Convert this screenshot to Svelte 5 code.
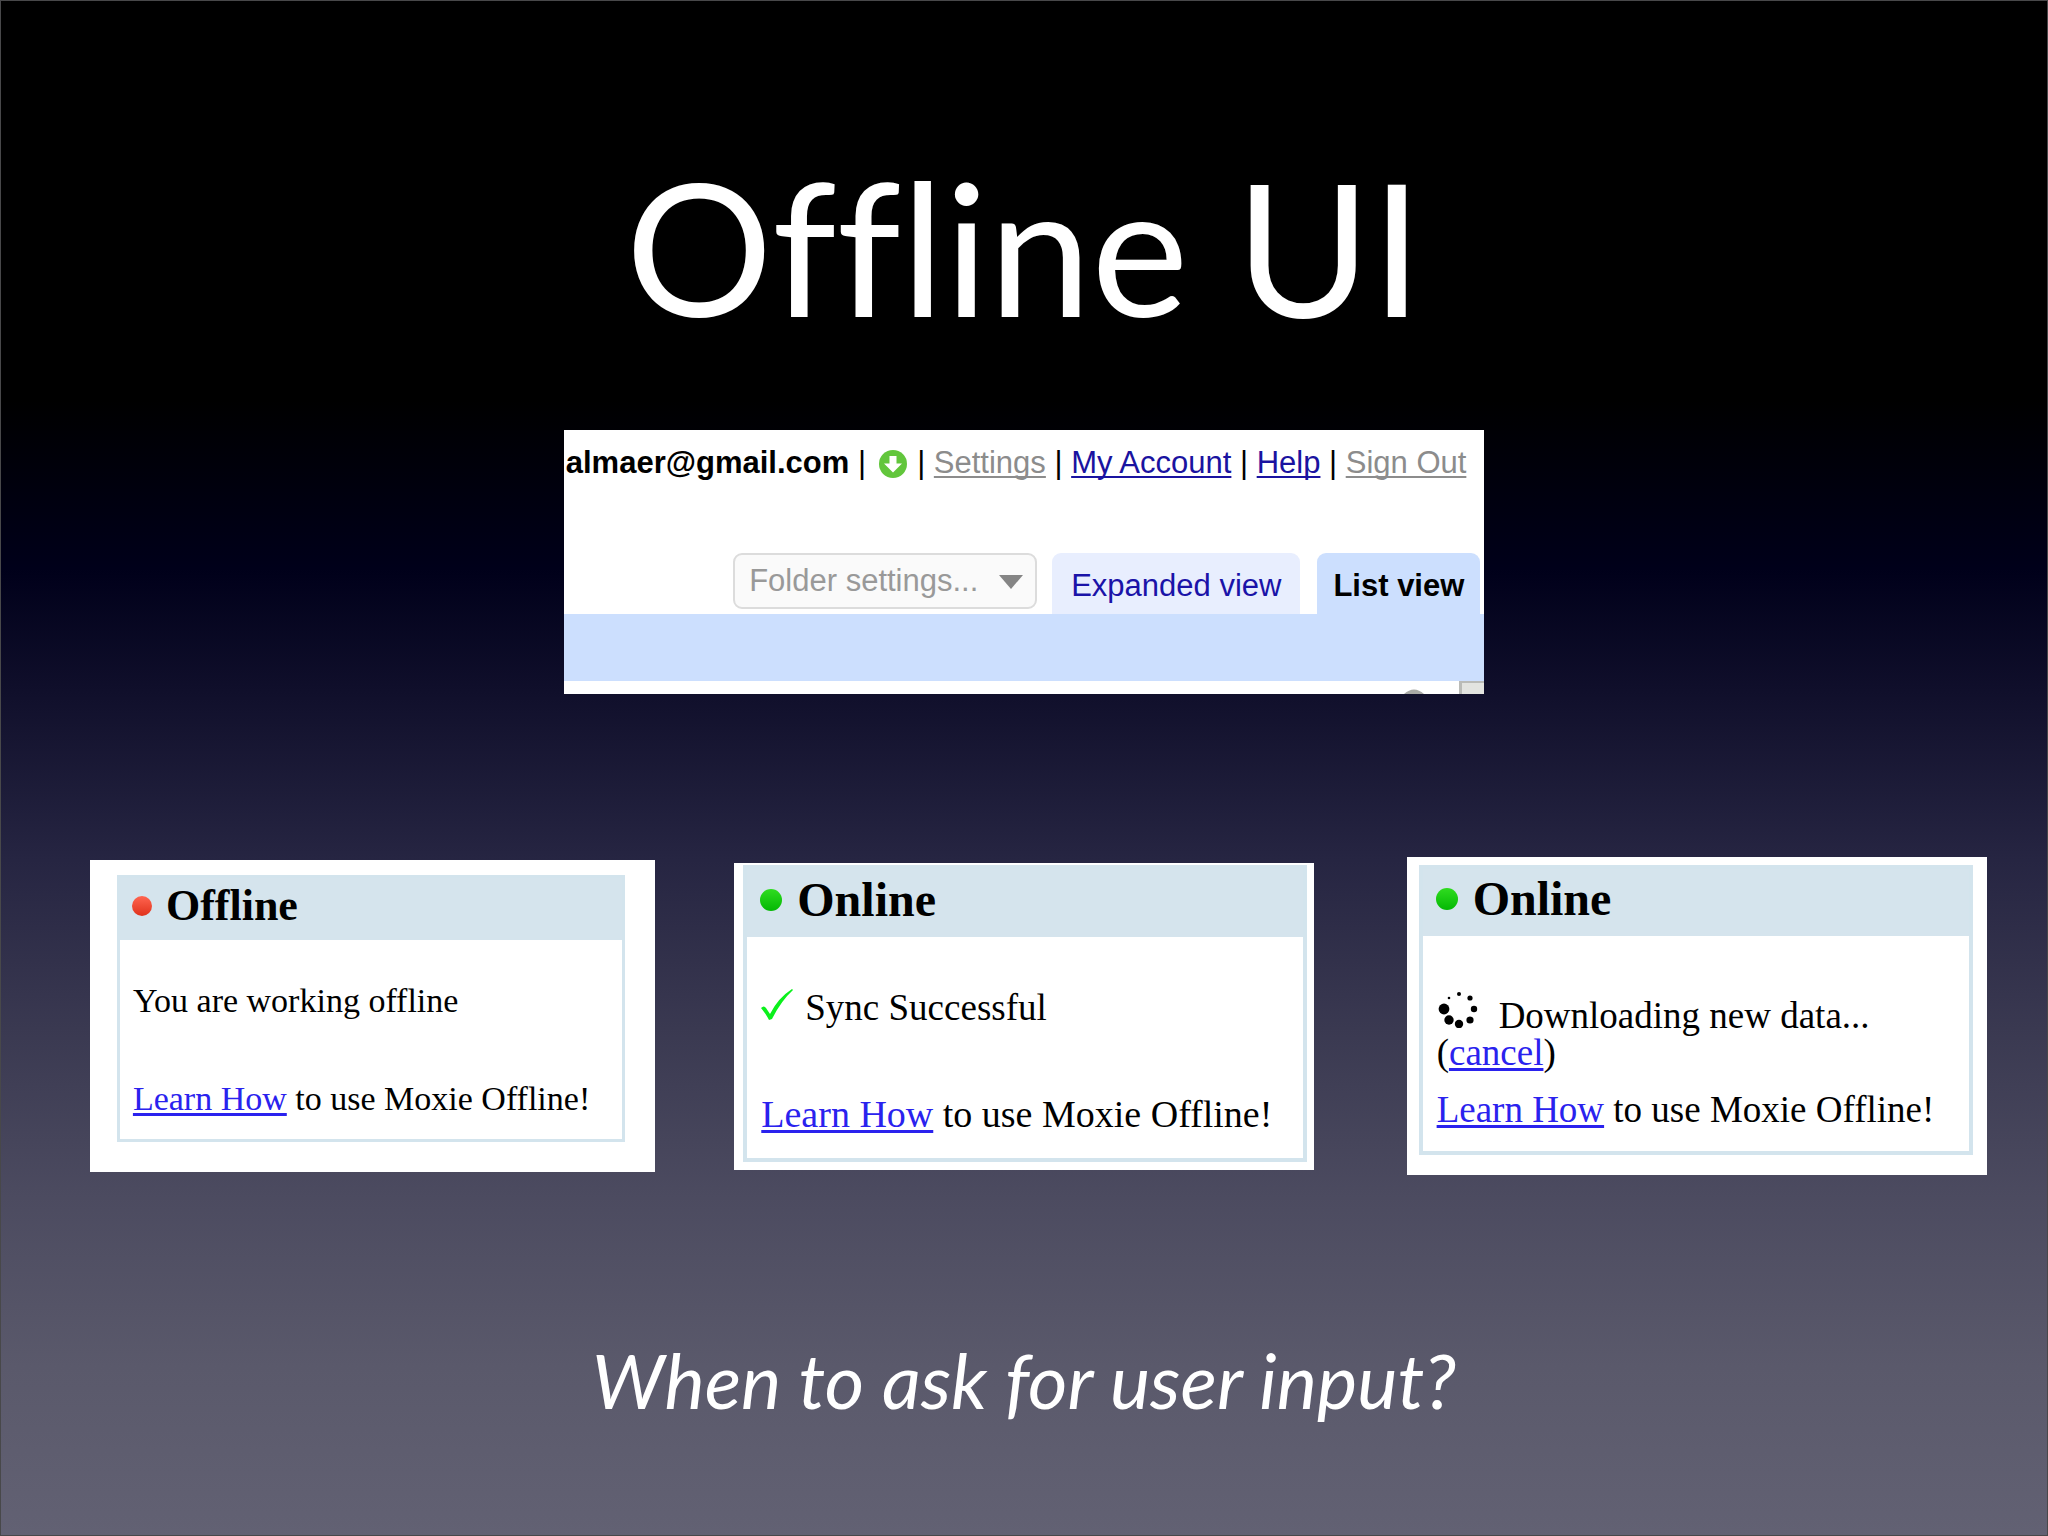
<!--
  Offline UI slide: a reader toolbar on top, three Moxie status panels
  below it, and the closing question.
-->
<script lang="ts">
	type Icon = 'check' | 'spinner' | null;

	interface Panel {
		id: string;
		status: string;
		online: boolean;
		icon: Icon;
		message: string;
		cancellable: boolean;
	}

	const panels: Panel[] = [
		{ id: 'offline', status: 'Offline', online: false, icon: null, message: 'You are working offline', cancellable: false },
		{ id: 'synced', status: 'Online', online: true, icon: 'check', message: 'Sync Successful', cancellable: false },
		{ id: 'syncing', status: 'Online', online: true, icon: 'spinner', message: 'Downloading new data...', cancellable: true },
	];

	// Spinner dots, clockwise from the smallest
	const dots = [
		{ x: 12, y: 8, r: 1.3 },
		{ x: 22, y: 4, r: 2 },
		{ x: 33, y: 8, r: 2.6 },
		{ x: 37, y: 19, r: 3.2 },
		{ x: 33, y: 30, r: 3.6 },
		{ x: 22, y: 34, r: 4.2 },
		{ x: 12, y: 30, r: 4.7 },
		{ x: 7, y: 19, r: 5.4 },
	];
</script>

<main class="slide">
	<h1>Offline UI</h1>

	<section class="reader">
		<nav class="account">
			<b>almaer@gmail.com</b> |
			<svg class="sync" viewBox="0 0 28 28" role="img" aria-label="Go offline">
				<circle cx="14" cy="14" r="14" fill="#62c63c" />
				<path d="M10.500 6h7v7.500h5.500L14 22.500 5 13.500h5.500z" fill="#fff" />
			</svg>
			| <a class="muted" href="#settings">Settings</a> | <a href="#account">My Account</a> | <a href="#help">Help</a> | <a class="muted" href="#signout">Sign Out</a>
		</nav>

		<div class="tabs">
			<div class="folder">
				<select aria-label="Folder settings">
					<option>Folder settings...</option>
				</select>
				<svg class="arrow" viewBox="0 0 24 14" aria-hidden="true">
					<path d="M0 0h24L12 14z" fill="#858585" />
				</svg>
			</div>
			<button class="tab">Expanded view</button>
			<button class="tab active">List view</button>
		</div>
		<div class="bar"></div>
		<div class="below">
			<svg class="knob" viewBox="0 0 24 6" aria-hidden="true">
				<path d="M0 6Q12-5 24 6z" fill="#a9aaa6" />
			</svg>
			<span class="scroll"></span>
		</div>
	</section>

	<div class="panels">
		{#each panels as panel (panel.id)}
			<section class="shot {panel.id}">
				<div class="box">
					<header>
						<span class="dot" class:online={panel.online}></span>
						<h2>{panel.status}</h2>
					</header>
					<div class="body">
						<div class="message">
							{#if panel.icon === 'check'}
								<svg class="check" viewBox="0 0 32 31" aria-hidden="true">
									<path d="M0 19Q3 16 5 19L9 25Q17 9 31 0L32 1Q20 12 11 30L8 31Q5 25 0 19z" fill="#0bf01c" />
								</svg>
							{:else if panel.icon === 'spinner'}
								<svg class="spinner" viewBox="0 0 44 38" aria-hidden="true">
									{#each dots as dot}
										<circle cx={dot.x} cy={dot.y} r={dot.r} />
									{/each}
								</svg>
							{/if}
							<span>{panel.message}</span>
						</div>
						{#if panel.cancellable}
							<div class="cancel">(<a href="#cancel">cancel</a>)</div>
						{/if}
						<p class="learn"><a href="#learn">Learn How</a> to use Moxie Offline!</p>
					</div>
				</div>
			</section>
		{/each}
	</div>

	<p class="question">When to ask for user input?</p>
</main>

<style>
	:global(body) {
		margin: 0;
		background: #62617a;
	}

	.slide {
		box-sizing: border-box;
		min-height: 100vh;
		display: flex;
		flex-direction: column;
		align-items: center;
		border: 1px solid #48484a;
		background: linear-gradient(
			#000 0%,
			#000 26%,
			#00001a 37%,
			#100f2b 45%,
			#262542 56%,
			#3a3951 67%,
			#4c4b60 78%,
			#5a596b 89%,
			#626173 100%
		);
	}

	h1,
	h2,
	p {
		margin: 0;
		font-weight: normal;
	}

	h1 {
		margin-top: 135px;
		color: #fff;
		font: 184px/220px Lato, sans-serif;
		font-variant-ligatures: none;
	}

	.reader {
		width: 45%;
		min-width: 919px;
		margin-top: 74px;
		overflow: hidden;
		background: #fff;
		color: #000;
		font: 31px/36px "Liberation Sans", Arial, sans-serif;
	}

	.account {
		padding: 15px 18px 0 0;
		text-align: right;
		white-space: nowrap;
	}

	.account a {
		color: #1a13a0;
		text-decoration-thickness: 2px;
		text-underline-offset: 3px;
		text-decoration-skip-ink: none;
	}

	.account a.muted {
		color: #8c8c8c;
	}

	.sync {
		width: 28px;
		height: 28px;
		margin: 0 2px 0 4px;
		vertical-align: -5px;
	}

	.tabs {
		display: flex;
		align-items: flex-start;
		justify-content: flex-end;
		margin-top: 72px;
		padding-right: 4px;
	}

	.folder {
		position: relative;
		margin-right: 15px;
	}

	select {
		box-sizing: border-box;
		width: 304px;
		height: 56px;
		padding: 0 48px 0 14px;
		border: 2px solid #dcdcdc;
		border-radius: 9px;
		appearance: none;
		background: #fafafa;
		color: #999;
		font: inherit;
	}

	.arrow {
		position: absolute;
		top: 22px;
		right: 14px;
		width: 24px;
		height: 14px;
		pointer-events: none;
	}

	.tab {
		height: 61px;
		padding: 4px 19px 0;
		border: 0;
		border-radius: 9px 9px 0 0;
		background: #e8eefe;
		color: #1a13a8;
		font: inherit;
	}

	.tab.active {
		margin-left: 17px;
		padding: 4px 16px 0;
		background: #ccdffe;
		color: #000;
		font-weight: bold;
	}

	.bar {
		height: 67px;
		background: #ccdffe;
	}

	.below {
		display: flex;
		align-items: flex-end;
		justify-content: flex-end;
		gap: 33px;
		height: 13px;
	}

	.knob {
		width: 24px;
		height: 5px;
	}

	.scroll {
		box-sizing: border-box;
		width: 25px;
		height: 13px;
		border: solid #babbb7;
		border-width: 2px 0 0 3px;
		background: #e3e4e0;
	}

	.panels {
		display: grid;
		grid-template-columns: 89fr 566fr 79fr 580fr 93fr 581fr 60fr;
		align-items: center;
		align-self: stretch;
		margin-top: 163px;
	}

	.shot {
		background: #fff;
		color: #000;
		font: 37px/42px "Liberation Serif", "Times New Roman", serif;
		white-space: nowrap;
	}

	.box {
		border: 4px solid #d3e4ed;
	}

	header {
		display: flex;
		align-items: center;
		gap: 15px;
		padding: 5px 13px 11px;
		background: #d5e4ed;
	}

	h2 {
		font-size: 48px;
		line-height: 52px;
		font-weight: bold;
	}

	.dot {
		width: 20px;
		height: 20px;
		border-radius: 50%;
		background: linear-gradient(#ff6550, #e0321c);
	}

	.dot.online {
		width: 22px;
		height: 22px;
		background: linear-gradient(#30dc20, #04b804);
	}

	.body {
		padding: 50px 14px 23px;
	}

	.message {
		display: flex;
		align-items: baseline;
		gap: 12px;
	}

	.learn {
		margin-top: 64px;
	}

	.shot a {
		color: #2a22ee;
		text-decoration-thickness: 3px;
		text-underline-offset: 3px;
		text-decoration-skip-ink: none;
	}

	.check {
		width: 32px;
		height: 31px;
	}

	.spinner {
		width: 44px;
		height: 38px;
	}

	/* The three captures differ in scale and in how tightly they are cropped */
	.offline {
		grid-column: 2;
		padding: 15px 30px 30px 27px;
		font-size: 34px;
		line-height: 40px;
	}

	.offline .box {
		border-width: 3px;
	}

	.offline header {
		gap: 14px;
		padding: 4px 12px 10px;
	}

	.offline h2 {
		font-size: 44px;
		line-height: 48px;
	}

	.offline .body {
		padding: 41px 13px 20px;
	}

	.offline .learn {
		margin-top: 58px;
	}

	.synced {
		grid-column: 4;
		padding: 2px 7px 8px 9px;
	}

	.synced .learn {
		font-size: 38px;
	}

	.syncing {
		grid-column: 6;
		padding: 8px 14px 20px 12px;
	}

	.syncing header {
		padding: 4px 13px 11px;
	}

	.syncing .body {
		padding-top: 54px;
		padding-bottom: 20px;
	}

	.syncing .message {
		gap: 18px;
		line-height: 37px;
	}

	.cancel {
		line-height: 37px;
	}

	.syncing .learn {
		margin-top: 18px;
	}

	.question {
		margin-top: 160px;
		padding-bottom: 80px;
		color: #fff;
		font: italic 76px/90px Lato, sans-serif;
	}
</style>
